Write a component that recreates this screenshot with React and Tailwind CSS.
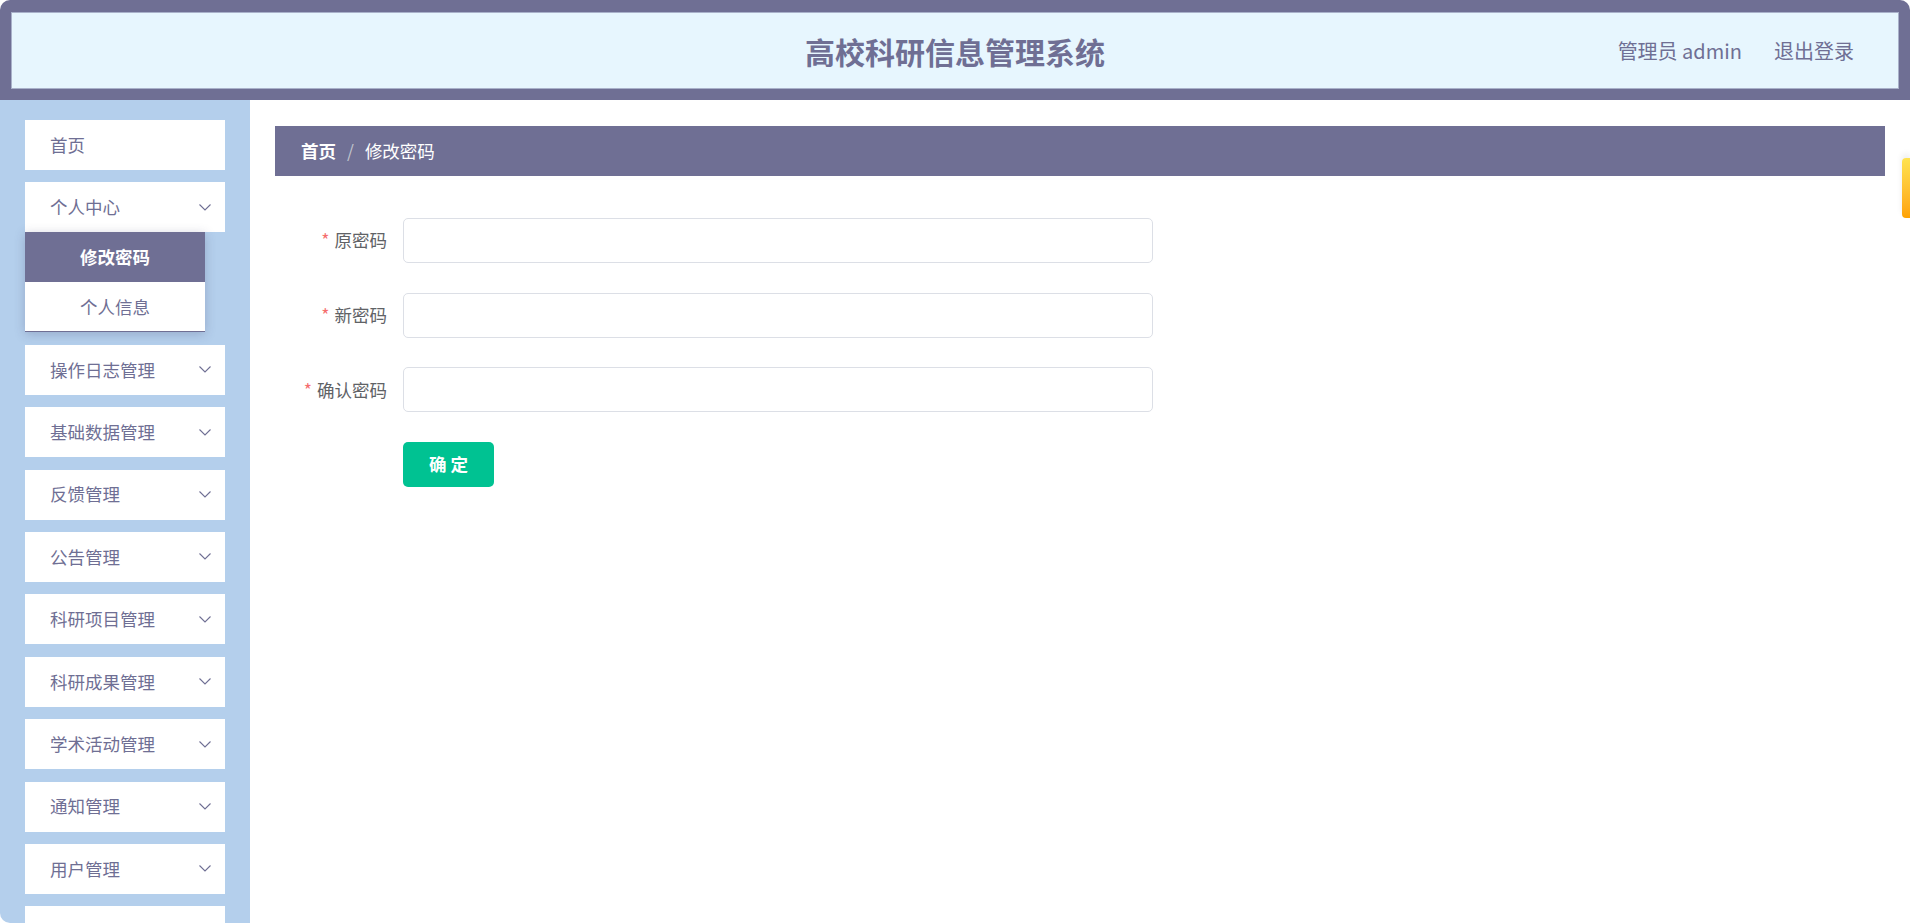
import { useState } from 'react'

const menus = [
  { label: '操作日志管理' },
  { label: '基础数据管理' },
  { label: '反馈管理' },
  { label: '公告管理' },
  { label: '科研项目管理' },
  { label: '科研成果管理' },
  { label: '学术活动管理' },
  { label: '通知管理' },
  { label: '用户管理' },
  { label: '' },
]

function Arrow() {
  return (
    <svg width="12" height="7" viewBox="0 0 12 7" fill="none" className="shrink-0">
      <polyline points="0.5,0.5 6,6 11.5,0.5" stroke="#6f6f94" strokeWidth="1.1" />
    </svg>
  )
}

function MenuItem({ label, arrow = true }) {
  return (
    <div className="h-[50px] w-[200px] bg-white flex items-center justify-between pl-[25px] pr-[14px] text-[17.5px] text-[#6f6f94] shrink-0">
      <span>{label}</span>
      {arrow && <Arrow />}
    </div>
  )
}

function Field({ label, value, onChange }) {
  return (
    <div className="flex items-center h-[45px]">
      <label className="w-[112px] text-right text-[17.5px] text-[#606266]">
        <span className="text-[#f56c6c] mr-[5px]">*</span>
        {label}
      </label>
      <input
        type="password"
        value={value}
        onChange={(e) => onChange(e.target.value)}
        className="ml-[16px] w-[750px] h-[45px] rounded-[5px] border border-[#dcdfe6] bg-white px-[19px] text-[17.5px] text-[#606266] outline-none focus:border-[#6f6f94]"
      />
    </div>
  )
}

export default function App() {
  const [oldPwd, setOldPwd] = useState('')
  const [newPwd, setNewPwd] = useState('')
  const [confirmPwd, setConfirmPwd] = useState('')

  return (
    <div className="relative h-[923px] w-full overflow-hidden rounded-[10px] bg-white flex flex-col font-['Noto_Sans_CJK_SC','Noto_Sans',sans-serif]">
      <header className="h-[100px] shrink-0 bg-[#6f6f94] pt-[12px] pb-[11px] px-[11px]">
        <div className="h-full border border-[#a9b1ca] bg-[#e7f6fe] grid grid-cols-[1fr_auto_1fr] items-center">
          <div />
          <h1 className="text-[30px] font-bold text-[#6f6f94] leading-none">高校科研信息管理系统</h1>
          <div className="flex justify-end items-center gap-[32px] pr-[44px] text-[20px] text-[#6f6f94] leading-none">
            <span>管理员 admin</span>
            <span className="cursor-pointer">退出登录</span>
          </div>
        </div>
      </header>

      <div className="flex flex-1 min-h-0">
        <aside className="w-[250px] shrink-0 bg-[#b4cfec] pt-[20px] pl-[25px] flex flex-col">
          <div className="mb-[12.4px]">
            <MenuItem label="首页" arrow={false} />
          </div>
          <div className="mb-[12.4px]">
            <MenuItem label="个人中心" />
            <div className="w-[180px] bg-white shadow-[0_2px_10px_rgba(60,60,100,0.25)] border-b border-[#6f6f94]">
              <div className="h-[50px] bg-[#6f6f94] flex items-center justify-center text-[17.5px] font-bold text-white">
                修改密码
              </div>
              <div className="h-[49px] flex items-center justify-center text-[17.5px] text-[#6f6f94]">
                个人信息
              </div>
            </div>
          </div>
          {menus.map((m, i) => (
            <div key={i} className="mb-[12.4px]">
              <MenuItem label={m.label} arrow={m.label !== ''} />
            </div>
          ))}
        </aside>

        <main className="flex-1 min-w-0 pt-[26px] pl-[25px] pr-[25px]">
          <div className="h-[50px] bg-[#6f6f94] flex items-center pl-[26px] text-[17.5px] text-white">
            <span className="font-bold">首页</span>
            <span className="mx-[11px] text-[#c0c4cc]">/</span>
            <span>修改密码</span>
          </div>

          <form
            className="mt-[42px] flex flex-col gap-[29.6px]"
            onSubmit={(e) => e.preventDefault()}
          >
            <Field label="原密码" value={oldPwd} onChange={setOldPwd} />
            <Field label="新密码" value={newPwd} onChange={setNewPwd} />
            <Field label="确认密码" value={confirmPwd} onChange={setConfirmPwd} />
            <div className="pl-[128px]">
              <button
                type="submit"
                className="w-[91px] h-[45px] rounded-[5px] bg-[#00c292] text-white text-[17.5px] font-bold"
              >
                确 定
              </button>
            </div>
          </form>
        </main>
      </div>

      <div className="absolute right-0 top-[158px] w-[8px] h-[60px] rounded-l-[4px] bg-gradient-to-b from-[#ffe34f] to-[#ffa200] shadow-[0_-4px_6px_rgba(0,0,0,0.08)]" />
    </div>
  )
}
